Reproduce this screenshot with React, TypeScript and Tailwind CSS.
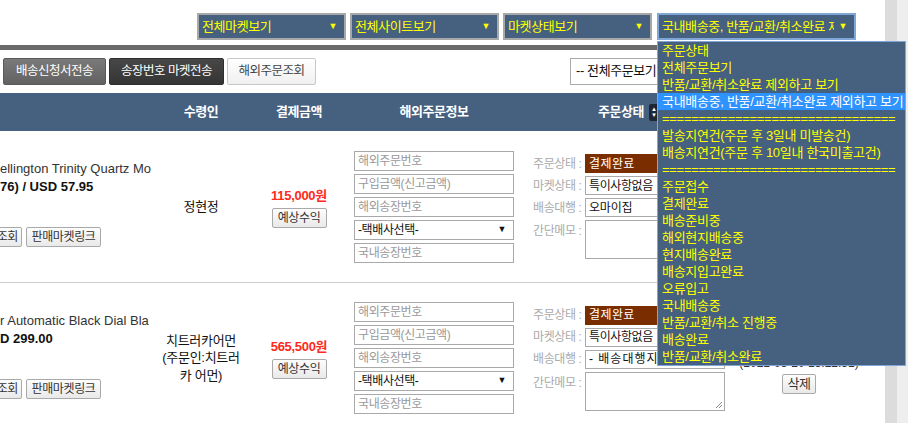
import React from "react";

const F = "font-['Liberation_Sans','Noto_Sans_CJK_KR',sans-serif]";

function TopSelect({ w, text, focused }: { w: string; text: string; focused?: boolean }) {
  return (
    <div
      className={`${w} h-[27px] flex items-center bg-[#46607f] border-2 ${
        focused ? "border-[#7fa6d6]" : "border-[#a8a8a8]"
      } text-[#ffff00] text-[13px] tracking-[-0.4px] pl-[3px] pr-[7px]`}
    >
      <span className="flex-1 overflow-hidden whitespace-nowrap">{text}</span>
      <span className="text-[9px] ml-[4px]">▼</span>
    </div>
  );
}

const menuItems = [
  "주문상태",
  "전체주문보기",
  "반품/교환/취소완료 제외하고 보기",
  "국내배송중, 반품/교환/취소완료 제외하고 보기",
  "================================",
  "발송지연건(주문 후 3일내 미발송건)",
  "배송지연건(주문 후 10일내 한국미출고건)",
  "================================",
  "주문접수",
  "결제완료",
  "배송준비중",
  "해외현지배송중",
  "현지배송완료",
  "배송지입고완료",
  "오류입고",
  "국내배송중",
  "반품/교환/취소 진행중",
  "배송완료",
  "반품/교환/취소완료",
];

function SmallBtn({ children, cls = "" }: { children: React.ReactNode; cls?: string }) {
  return (
    <div
      className={`h-[20px] flex items-center justify-center border border-[#a9a9a9] rounded-[2px] bg-gradient-to-b from-[#fdfdfd] to-[#e9e9e9] text-[12px] tracking-[-0.4px] text-[#333] shrink-0 ${cls}`}
    >
      {children}
    </div>
  );
}

function Field({ children, dark, cls = "" }: { children: React.ReactNode; dark?: boolean; cls?: string }) {
  return (
    <div
      className={`w-[160px] h-[20px] border border-[#a9a9a9] bg-white flex items-center px-[3px] text-[12px] tracking-[-0.4px] whitespace-nowrap shrink-0 ${
        dark ? "text-[#111]" : "text-[#999]"
      } ${cls}`}
    >
      {children}
    </div>
  );
}

function Row({
  line1,
  line2,
  receiver,
  amount,
  carrier,
  first,
}: {
  line1: string;
  line2: string;
  receiver: React.ReactNode;
  amount: string;
  carrier: React.ReactNode;
  first?: boolean;
}) {
  return (
    <div className={`flex shrink-0 ${first ? "h-[152px] border-b border-[#cccccc]" : "h-[150px]"}`}>
      {/* product */}
      <div className="w-[152px] flex flex-col justify-start pt-[29px] overflow-hidden">
        <div className="text-[13px] leading-[18px] text-[#333] whitespace-nowrap">{line1}</div>
        <div className="text-[13px] leading-[18px] font-bold text-[#111] whitespace-nowrap">{line2}</div>
        <div className="flex gap-[4px] mt-[31px]">
          <SmallBtn cls="w-[40px] -ml-[18px] justify-end pr-[3px]">조회</SmallBtn>
          <SmallBtn cls="w-[75px]">판매마켓링크</SmallBtn>
        </div>
      </div>
      {/* receiver */}
      <div className="w-[98px] flex items-center justify-center text-center text-[13px] leading-[17.5px] text-[#111] tracking-[-0.3px]">
        {receiver}
      </div>
      {/* amount */}
      <div className="w-[98px] flex flex-col items-center justify-center pt-[2px]">
        <div className="text-[13px] font-bold text-[#ff2a1a] leading-[16px] tracking-[-0.3px]">{amount}</div>
        <SmallBtn cls="w-[55px] mt-[4px]">예상수익</SmallBtn>
      </div>
      {/* foreign info */}
      <div className="w-[172px] flex flex-col justify-center gap-[3px] pl-[6px]">
        <Field>해외주문번호</Field>
        <Field>구입금액(신고금액)</Field>
        <Field>해외송장번호</Field>
        <Field dark cls="justify-between">
          <span>-택배사선택-</span>
          <span className="text-[9px] mr-[4px]">▼</span>
        </Field>
        <Field>국내송장번호</Field>
      </div>
      {/* status */}
      <div className="w-[208px] flex flex-col justify-center pl-[13px] gap-[3px]">
        <div className="flex items-center h-[19px]">
          <span className="w-[52px] text-[12px] tracking-[-0.4px] text-[#aaa]">주문상태 :</span>
          <div className="w-[140px] h-[19px] bg-[#7a2e00] text-white text-[12px] tracking-[0.4px] flex items-center px-[4px]">
            결제완료
          </div>
        </div>
        <div className="flex items-center h-[19px]">
          <span className="w-[52px] text-[12px] tracking-[-0.4px] text-[#aaa]">마켓상태 :</span>
          <div className="w-[140px] h-[19px] bg-white border border-[#a9a9a9] text-[#111] text-[12px] tracking-[-0.4px] flex items-center px-[3px]">
            특이사항없음
          </div>
        </div>
        <div className="flex items-center h-[19px]">
          <span className="w-[52px] text-[12px] tracking-[-0.4px] text-[#aaa]">배송대행 :</span>
          <div className="w-[140px] h-[19px] bg-white border border-[#a9a9a9] text-[#111] text-[12px] tracking-[-0.2px] flex items-center px-[3px] whitespace-nowrap">
            {carrier}
          </div>
        </div>
        <div className="flex items-start h-[39px]">
          <span className="w-[52px] text-[12px] tracking-[-0.4px] text-[#aaa] mt-[2px]">간단메모 :</span>
          <div className="w-[140px] h-[39px] bg-white border border-[#a9a9a9] relative">
            <svg className="absolute right-[1px] bottom-[1px]" width="8" height="8" viewBox="0 0 8 8">
              <path d="M7 1 L1 7 M7 4 L4 7" stroke="#888" strokeWidth="1" />
            </svg>
          </div>
        </div>
      </div>
      {/* date / delete */}
      <div className="w-[142px] flex flex-col items-center justify-center pt-[34px]">
        <div className="text-[12px] text-[#333] leading-[14px] whitespace-nowrap">(2021-05-20 15:22:51)</div>
        <SmallBtn cls="w-[34px] h-[19px] mt-[4px] text-[13px]">삭제</SmallBtn>
      </div>
      <div className="flex-1" />
    </div>
  );
}

export default function App() {
  return (
    <div className={`relative flex w-[908px] h-[423px] overflow-hidden ${F}`}>
      <div className="w-[885px] h-full bg-white flex flex-col overflow-hidden">
        {/* top selects */}
        <div className="h-[45px] shrink-0 flex items-start pt-[13px] pl-[197px]">
          <TopSelect w="w-[149px]" text="전체마켓보기" />
          <div className="w-[4px]" />
          <TopSelect w="w-[149px]" text="전체사이트보기" />
          <div className="w-[4px]" />
          <TopSelect w="w-[149px]" text="마켓상태보기" />
          <div className="w-[5px]" />
          <TopSelect w="w-[199px]" text="국내배송중, 반품/교환/취소완료 제외하고 보기" focused />
        </div>
        <div className="h-[5px] shrink-0 bg-[#6a6a6a]" />
        {/* toolbar */}
        <div className="h-[43px] shrink-0 flex items-center pl-[3px]">
          <div className="w-[103px] h-[27px] flex items-center justify-center rounded-[2px] bg-gradient-to-b from-[#7a7a7a] to-[#626262] border border-[#5a5a5a] text-white text-[12.5px] tracking-[-0.5px]">
            배송신청서전송
          </div>
          <div className="w-[115px] h-[27px] ml-[3px] flex items-center justify-center rounded-[2px] bg-gradient-to-b from-[#474747] to-[#353535] border border-[#2e2e2e] text-white text-[12.5px] tracking-[-0.5px]">
            송장번호 마켓전송
          </div>
          <div className="w-[89px] h-[27px] ml-[3px] flex items-center justify-center rounded-[2px] bg-gradient-to-b from-[#ffffff] to-[#f0f0f0] border border-[#c8c8c8] text-[#444] text-[12.5px] tracking-[-0.5px]">
            해외주문조회
          </div>
          <div className="w-[140px] h-[27px] ml-[254px] mb-[1px] border border-[#aaaaaa] bg-white flex items-center pl-[5px] text-[13px] tracking-[-0.4px] text-[#111] whitespace-nowrap">
            -- 전체주문보기
          </div>
        </div>
        {/* header */}
        <div className="h-[38px] shrink-0 bg-[#46607f] flex items-center text-white font-bold text-[13px] tracking-[-0.5px]">
          <div className="w-[152px]" />
          <div className="w-[98px] text-center">수령인</div>
          <div className="w-[98px] text-center">결제금액</div>
          <div className="w-[172px] text-center">해외주문정보</div>
          <div className="w-[208px] flex items-center pl-[78px]">
            <span>주문상태</span>
            <span className="ml-[5px] w-[10px] h-[17px] rounded-[2px] bg-[#1d2734] flex flex-col items-center justify-center text-[6px] leading-[6px] text-white">
              <span>▲</span>
              <span>▼</span>
            </span>
          </div>
        </div>
        {/* rows */}
        <Row
          first
          line1="ellington Trinity Quartz Mo"
          line2="76) / USD 57.95"
          receiver={<span>정현정</span>}
          amount="115,000원"
          carrier={<span>오마이집</span>}
        />
        <Row
          line1="r Automatic Black Dial Bla"
          line2="D 299.00"
          receiver={
            <span>
              치트러카어먼
              <br />
              (주문인:치트러
              <br />
              카 어먼)
            </span>
          }
          amount="565,500원"
          carrier={<span className="tracking-[1px]">- 배송대행지</span>}
        />
      </div>
      <div className="w-[12px] h-full bg-[#dcdcdc]" />
      <div className="w-[11px] h-full bg-[#eeeeee]" />

      {/* open dropdown list */}
      <div className="absolute left-[657px] top-[41px] w-[249px] border border-[#7fa6d6] bg-[#46607f] z-10">
        {menuItems.map((t, i) => (
          <div
            key={i}
            className={`h-[17px] flex items-center pl-[4px] text-[13px] tracking-[-0.3px] whitespace-nowrap overflow-hidden ${
              i === 3 ? "bg-[#2f93ff] text-white" : "text-[#ffff00]"
            }`}
          >
            {t}
          </div>
        ))}
      </div>
    </div>
  );
}
